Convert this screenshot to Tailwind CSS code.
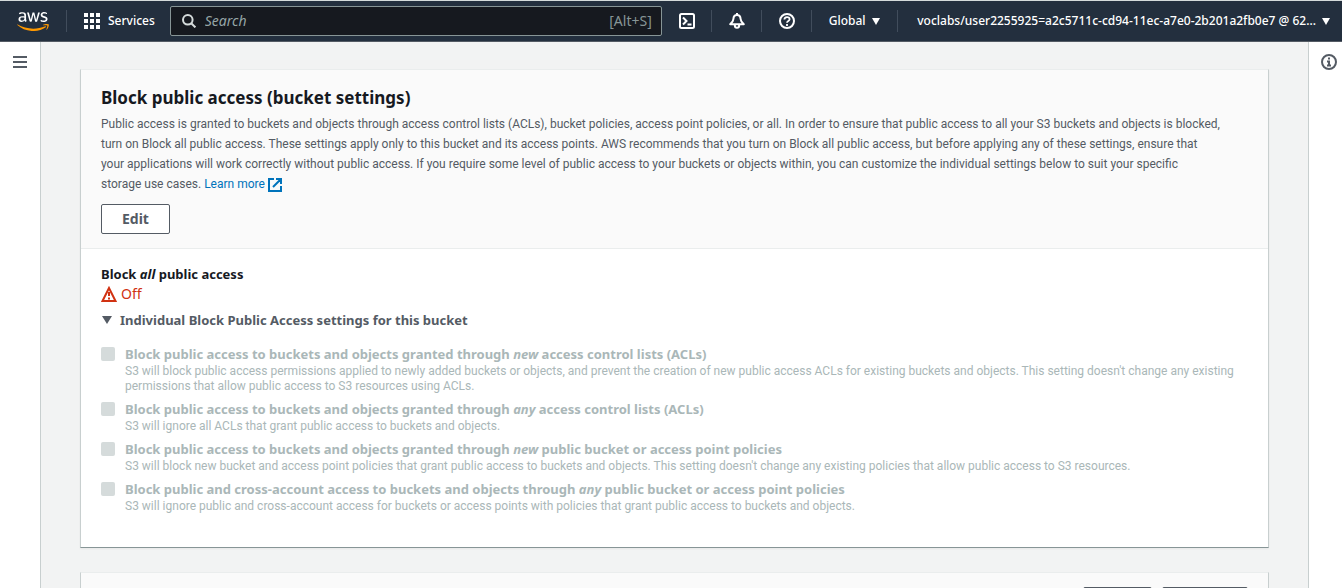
<!DOCTYPE html>
<html lang="en">
<head>
<meta charset="utf-8">
<meta name="viewport" content="width=device-width, initial-scale=1">
<title>Block public access</title>
<script src="https://cdn.jsdelivr.net/npm/@tailwindcss/browser@4"></script>
</head>
<body class="flex h-screen flex-col overflow-hidden bg-[#f2f3f3] font-['Noto_Sans','Open_Sans',sans-serif] text-xs text-[#545b64]">
<header class="flex h-[42px] shrink-0 items-center border-t border-b border-t-[#d5dbdb] border-b-[#545b64] bg-[#232f3e] pr-3 text-xs font-medium text-white">
  <a href="#" aria-label="AWS home" class="ml-[17px] flex w-8 shrink-0 pt-px">
    <svg class="w-8" viewBox="0 0 304 182" fill="none" aria-hidden="true">
      <path fill="#fff" d="M86.400 66.400c0 3.700.4 6.700 1.100 8.900.8 2.200 1.800 4.600 3.200 7.200.5.800.7 1.600.7 2.300 0 1-.6 2-1.900 3l-6.300 4.200c-.9.600-1.800.9-2.600.9-1 0-2-.5-3-1.400-1.400-1.500-2.600-3.100-3.600-4.700-1-1.700-2-3.600-3.100-5.900-7.800 9.200-17.600 13.800-29.400 13.800-8.400 0-15.100-2.400-20-7.200-4.900-4.800-7.400-11.200-7.400-19.200 0-8.500 3-15.400 9.100-20.600 6.100-5.200 14.200-7.800 24.500-7.800 3.400 0 6.900.3 10.600.8 3.700.5 7.500 1.300 11.500 2.200v-7.300c0-7.600-1.600-12.900-4.700-16-3.200-3.100-8.600-4.600-16.300-4.600-3.500 0-7.100.4-10.800 1.300-3.700.9-7.300 2-10.800 3.400-1.600.7-2.800 1.100-3.500 1.300-.7.200-1.200.3-1.600.3-1.400 0-2.100-1-2.100-3.100v-4.900c0-1.600.2-2.800.7-3.500.5-.7 1.400-1.400 2.800-2.100 3.500-1.800 7.700-3.300 12.600-4.500 4.900-1.300 10.100-1.900 15.600-1.900 11.900 0 20.600 2.700 26.200 8.100 5.500 5.400 8.300 13.600 8.300 24.600v32.400zM45.800 81.600c3.300 0 6.700-.6 10.300-1.800 3.600-1.200 6.800-3.400 9.500-6.400 1.600-1.900 2.800-4 3.400-6.400.6-2.400 1-5.300 1-8.700v-4.200c-2.900-.7-6-1.300-9.200-1.700-3.200-.4-6.300-.6-9.400-.6-6.700 0-11.600 1.300-14.900 4-3.300 2.700-4.900 6.500-4.900 11.500 0 4.700 1.200 8.200 3.700 10.600 2.400 2.500 5.900 3.700 10.500 3.700zm80.300 10.800c-1.800 0-3-.3-3.800-1-.8-.6-1.500-2-2.100-3.900L96.700 10.200c-.6-2-.9-3.300-.9-4 0-1.600.8-2.500 2.400-2.500h9.800c1.900 0 3.200.3 3.900 1 .8.6 1.400 2 2 3.900l16.800 66.200 15.600-66.200c.5-2 1.100-3.300 1.900-3.900.8-.6 2.200-1 4-1h8c1.900 0 3.200.3 4 1 .8.6 1.500 2 1.900 3.900l15.800 67 17.300-67c.6-2 1.300-3.300 2-3.900.8-.6 2.100-1 3.900-1h9.300c1.600 0 2.500.8 2.500 2.500 0 .5-.1 1-.2 1.600-.1.600-.3 1.400-.7 2.500l-24.100 77.300c-.6 2-1.300 3.300-2.100 3.900-.8.600-2.100 1-3.800 1h-8.600c-1.900 0-3.200-.3-4-1-.8-.7-1.500-2-1.900-4L156 23l-15.400 64.400c-.5 2-1.100 3.300-1.900 4-.8.7-2.200 1-4 1zm128.500 2.700c-5.200 0-10.400-.6-15.400-1.800-5-1.200-8.900-2.500-11.500-4-1.600-.9-2.700-1.900-3.100-2.800-.4-.9-.6-1.900-.6-2.800v-5.100c0-2.100.8-3.100 2.300-3.100.6 0 1.200.1 1.800.3.600.2 1.500.6 2.500 1 3.400 1.500 7.100 2.700 11 3.500 4 .8 7.900 1.200 11.900 1.200 6.300 0 11.200-1.100 14.600-3.300 3.400-2.200 5.200-5.400 5.200-9.500 0-2.800-.9-5.100-2.700-7-1.800-1.900-5.200-3.600-10.100-5.200L246 52c-7.300-2.300-12.700-5.700-16-10.200-3.300-4.400-5-9.300-5-14.500 0-4.200.9-7.900 2.700-11.100 1.800-3.200 4.200-6 7.200-8.200 3-2.300 6.400-4 10.400-5.200 4-1.200 8.200-1.700 12.600-1.700 2.200 0 4.500.1 6.700.4 2.300.3 4.400.7 6.500 1.100 2 .5 3.900 1 5.700 1.600 1.800.6 3.200 1.200 4.200 1.800 1.400.8 2.400 1.600 3 2.500.6.800.9 1.900.9 3.300v4.700c0 2.100-.8 3.200-2.300 3.200-.8 0-2.100-.4-3.800-1.200-5.700-2.600-12.100-3.900-19.200-3.900-5.700 0-10.200.9-13.300 2.800-3.100 1.900-4.700 4.800-4.700 8.900 0 2.800 1 5.200 3 7.100 2 1.900 5.700 3.800 11 5.500l14.200 4.500c7.200 2.300 12.400 5.500 15.500 9.600 3.100 4.100 4.600 8.800 4.600 14 0 4.300-.9 8.200-2.600 11.600-1.800 3.400-4.200 6.400-7.300 8.800-3.100 2.500-6.800 4.300-11.100 5.600-4.500 1.400-9.200 2.100-14.300 2.100z"/>
      <path fill="#f90" d="M273.500 143.700c-32.900 24.300-80.700 37.200-121.800 37.200-57.600 0-109.500-21.300-148.700-56.700-3.100-2.800-.3-6.600 3.400-4.400 42.400 24.600 94.700 39.500 148.800 39.500 36.500 0 76.600-7.600 113.500-23.200 5.500-2.500 10.200 3.600 4.800 7.600z"/>
      <path fill="#f90" d="M287.200 128.100c-4.200-5.400-27.800-2.600-38.500-1.300-3.200.4-3.700-2.400-.8-4.500 18.800-13.200 49.700-9.400 53.300-5 3.600 4.500-1 35.400-18.600 50.200-2.700 2.300-5.300 1.100-4.100-1.900 4-9.900 12.900-32.200 8.700-37.500z"/>
    </svg>
  </a>
  <span class="ml-[17px] h-[22px] w-px bg-[#414d5c]"></span>
  <button class="ml-[17px] flex items-center gap-2">
    <svg class="size-4" viewBox="0 0 16 16" fill="#fff" aria-hidden="true"><path d="M0 0h4v4H0zM6 0h4v4H6zM12 0h4v4h-4zM0 6h4v4H0zM6 6h4v4H6zM12 6h4v4h-4zM0 12h4v4H0zM6 12h4v4H6zM12 12h4v4h-4z"/></svg>
    Services
  </button>
  <label class="ml-[15px] flex h-[30px] w-[492px] items-center rounded-xs border border-[#879596] bg-[#16191f] px-[9px]">
    <svg class="ml-[2px] size-[14px] shrink-0" viewBox="0 0 14 14" fill="none" stroke="#d5dbdb" stroke-width="2" aria-hidden="true"><circle cx="5.800" cy="5.800" r="4.800"/><path d="m9.200 9.200 4.200 4.200"/></svg>
    <input type="search" aria-label="Search" placeholder="Search" class="ml-[9px] min-w-0 flex-1 bg-transparent text-sm font-normal text-white outline-none placeholder:text-[#95a5a6] placeholder:italic">
    <span class="text-sm font-normal text-[#879596]">[Alt+S]</span>
  </label>
  <button aria-label="CloudShell" class="ml-[17px]">
    <svg class="size-4" viewBox="0 0 16 16" fill="none" stroke="#fff" stroke-width="2" aria-hidden="true"><rect x="1" y="1" width="14" height="14" rx="1.500"/><path d="m4 4.500 3.500 3.500L4 11.500M8.500 11.500h4"/></svg>
  </button>
  <span class="ml-4 h-[22px] w-px bg-[#414d5c]"></span>
  <button aria-label="Notifications" class="ml-[17px]">
    <svg class="size-4" viewBox="0 0 16 16" fill="none" stroke="#fff" stroke-width="2" stroke-linejoin="round" aria-hidden="true"><path d="M8 2c-2.600 0-3.500 1.600-3.600 4C4.300 8.400 3.400 9.300 1.200 11.200h13.600c-2.200-1.900-3.100-2.800-3.200-5.200C11.500 3.600 10.600 2 8 2zM8 0v2"/><path d="M5.800 12c0 3.800 4.400 3.800 4.400 0"/></svg>
  </button>
  <span class="ml-4 h-[22px] w-px bg-[#414d5c]"></span>
  <button aria-label="Help" class="ml-[17px]">
    <svg class="size-4" viewBox="0 0 16 16" fill="none" stroke="#fff" stroke-width="2" aria-hidden="true"><circle cx="8" cy="8" r="7"/><path stroke-width="1.800" d="M5.400 6.600c0-3.300 5.200-3.300 5.200-.4 0 1.800-2.600 1.700-2.600 3.600M8 10.900v2"/></svg>
  </button>
  <span class="ml-4 h-[22px] w-px bg-[#414d5c]"></span>
  <button class="ml-[17px] flex items-center gap-[6px]">Global
    <svg class="h-[7px] w-2" viewBox="0 0 8 7" fill="#fff" aria-hidden="true"><path d="M0 0h8L4 7z"/></svg>
  </button>
  <span class="ml-[17px] h-[22px] w-px bg-[#414d5c]"></span>
  <button class="ml-auto flex items-center gap-[6px] whitespace-nowrap">voclabs/user2255925=a2c5711c-cd94-11ec-a7e0-2b201a2fb0e7 @ 62...
    <svg class="h-[7px] w-2" viewBox="0 0 8 7" fill="#fff" aria-hidden="true"><path d="M0 0h8L4 7z"/></svg>
  </button>
</header>
<div class="flex min-h-0 flex-1">
  <nav class="w-[41px] shrink-0 border-r border-[#c8cfcf] bg-white">
    <button aria-label="Open navigation" class="mt-[14px] ml-[13px] block">
      <svg class="h-3 w-[14px]" viewBox="0 0 14 12" fill="#545b64" aria-hidden="true"><path d="M0 0h14v2H0zM0 5h14v2H0zM0 10h14v2H0z"/></svg>
    </button>
  </nav>
  <main class="flex min-w-0 flex-1 flex-col gap-6 overflow-hidden pt-[27px] pr-[39px] pl-[39px]">
    <section class="shrink-0 border border-t-[#eaeded] border-r-[#c8cfcf] border-b-[#879596] border-l-[#c8cfcf] bg-white shadow-xs">
      <div class="border-b border-[#eaeded] bg-[#fafafa] px-5 pt-4 pb-[14px]">
        <h2 class="text-[17px] leading-6 font-bold text-[#16191f]">Block public access (bucket settings)</h2>
        <p class="mt-1 font-[Roboto,sans-serif] leading-5">Public access is granted to buckets and objects through access control lists (ACLs), bucket policies, access point policies, or all. In order to ensure that public access to all your S3 buckets and objects is blocked,<br>turn on Block all public access. These settings apply only to this bucket and its access points. AWS recommends that you turn on Block all public access, but before applying any of these settings, ensure that<br>your applications will work correctly without public access. If you require some level of public access to your buckets or objects within, you can customize the individual settings below to suit your specific<br>storage use cases. <a href="#" class="text-[#0073bb]">Learn more <svg class="inline size-[14px]" viewBox="0 0 14 14" fill="none" stroke="#0073bb" stroke-width="2" aria-hidden="true"><path d="M6 1H1v12h12V8M8 1h5v5M13 1 5 9"/></svg></a></p>
        <button class="mt-[10px] h-[30px] rounded-xs border border-[#545b64] bg-white px-5 text-sm font-bold">Edit</button>
      </div>
      <div class="px-5 pt-[15px] pb-[33px]">
        <h3 class="text-[13px] leading-5 font-bold text-[#16191f]">Block <i>all</i> public access</h3>
        <p class="flex items-center gap-1 text-sm leading-5 text-[#d13212]">
          <svg class="size-4" viewBox="0 0 16 16" fill="none" stroke="#d13212" stroke-width="2" aria-hidden="true"><path d="M8 2 1.500 15h13z"/><path d="M8 6v4M8 11.500v2"/></svg>Off</p>
        <button class="mt-[6px] flex items-center gap-2 text-[13px] leading-5 font-bold">
          <svg class="ml-px h-2 w-[10px]" viewBox="0 0 10 8" fill="#545b64" aria-hidden="true"><path d="M0 0h10L5 8z"/></svg>Individual Block Public Access settings for this bucket</button>
        <ul class="mt-[14px] flex flex-col gap-[5px] text-[#aab7b8]">
          <li class="flex gap-[10px]"><input id="c1" type="checkbox" disabled class="mt-[3px] size-[14px] shrink-0 appearance-none rounded-xs bg-[#d5dbdb]">
            <label for="c1"><b class="block text-[13px] leading-5">Block public access to buckets and objects granted through <i>new</i> access control lists (ACLs)</b><span class="block font-[Roboto,sans-serif] leading-[15px]">S3 will block public access permissions applied to newly added buckets or objects, and prevent the creation of new public access ACLs for existing buckets and objects. This setting doesn't change any existing<br>permissions that allow public access to S3 resources using ACLs.</span></label></li>
          <li class="flex gap-[10px]"><input id="c2" type="checkbox" disabled class="mt-[3px] size-[14px] shrink-0 appearance-none rounded-xs bg-[#d5dbdb]">
            <label for="c2"><b class="block text-[13px] leading-5">Block public access to buckets and objects granted through <i>any</i> access control lists (ACLs)</b><span class="block font-[Roboto,sans-serif] leading-[15px]">S3 will ignore all ACLs that grant public access to buckets and objects.</span></label></li>
          <li class="flex gap-[10px]"><input id="c3" type="checkbox" disabled class="mt-[3px] size-[14px] shrink-0 appearance-none rounded-xs bg-[#d5dbdb]">
            <label for="c3"><b class="block text-[13px] leading-5">Block public access to buckets and objects granted through <i>new</i> public bucket or access point policies</b><span class="block font-[Roboto,sans-serif] leading-[15px]">S3 will block new bucket and access point policies that grant public access to buckets and objects. This setting doesn't change any existing policies that allow public access to S3 resources.</span></label></li>
          <li class="flex gap-[10px]"><input id="c4" type="checkbox" disabled class="mt-[3px] size-[14px] shrink-0 appearance-none rounded-xs bg-[#d5dbdb]">
            <label for="c4"><b class="block text-[13px] leading-5">Block public and cross-account access to buckets and objects through <i>any</i> public bucket or access point policies</b><span class="block font-[Roboto,sans-serif] leading-[15px]">S3 will ignore public and cross-account access for buckets or access points with policies that grant public access to buckets and objects.</span></label></li>
        </ul>
      </div>
    </section>
    <section class="flex shrink-0 justify-end gap-[10px] border border-t-[#eaeded] border-r-[#c8cfcf] border-b-[#879596] border-l-[#c8cfcf] bg-[#fafafa] px-5 py-[14px]">
      <button aria-label="Secondary action" class="h-[30px] w-[69px] rounded-xs border border-[#545b64] bg-white"></button>
      <button aria-label="Primary action" class="h-[30px] w-[86px] rounded-xs border border-[#545b64] bg-white"></button>
    </section>
  </main>
  <aside class="w-[34px] shrink-0 border-l border-[#c8cfcf] bg-white">
    <button aria-label="Info" class="mt-3 ml-3 block">
      <svg class="size-4" viewBox="0 0 16 16" fill="none" stroke="#545b64" stroke-width="2" aria-hidden="true"><circle cx="8" cy="8" r="7"/><path d="M8 3.500v2M6 7.500h2V12M6 11.500h4"/></svg>
    </button>
  </aside>
</div>
</body>
</html>
